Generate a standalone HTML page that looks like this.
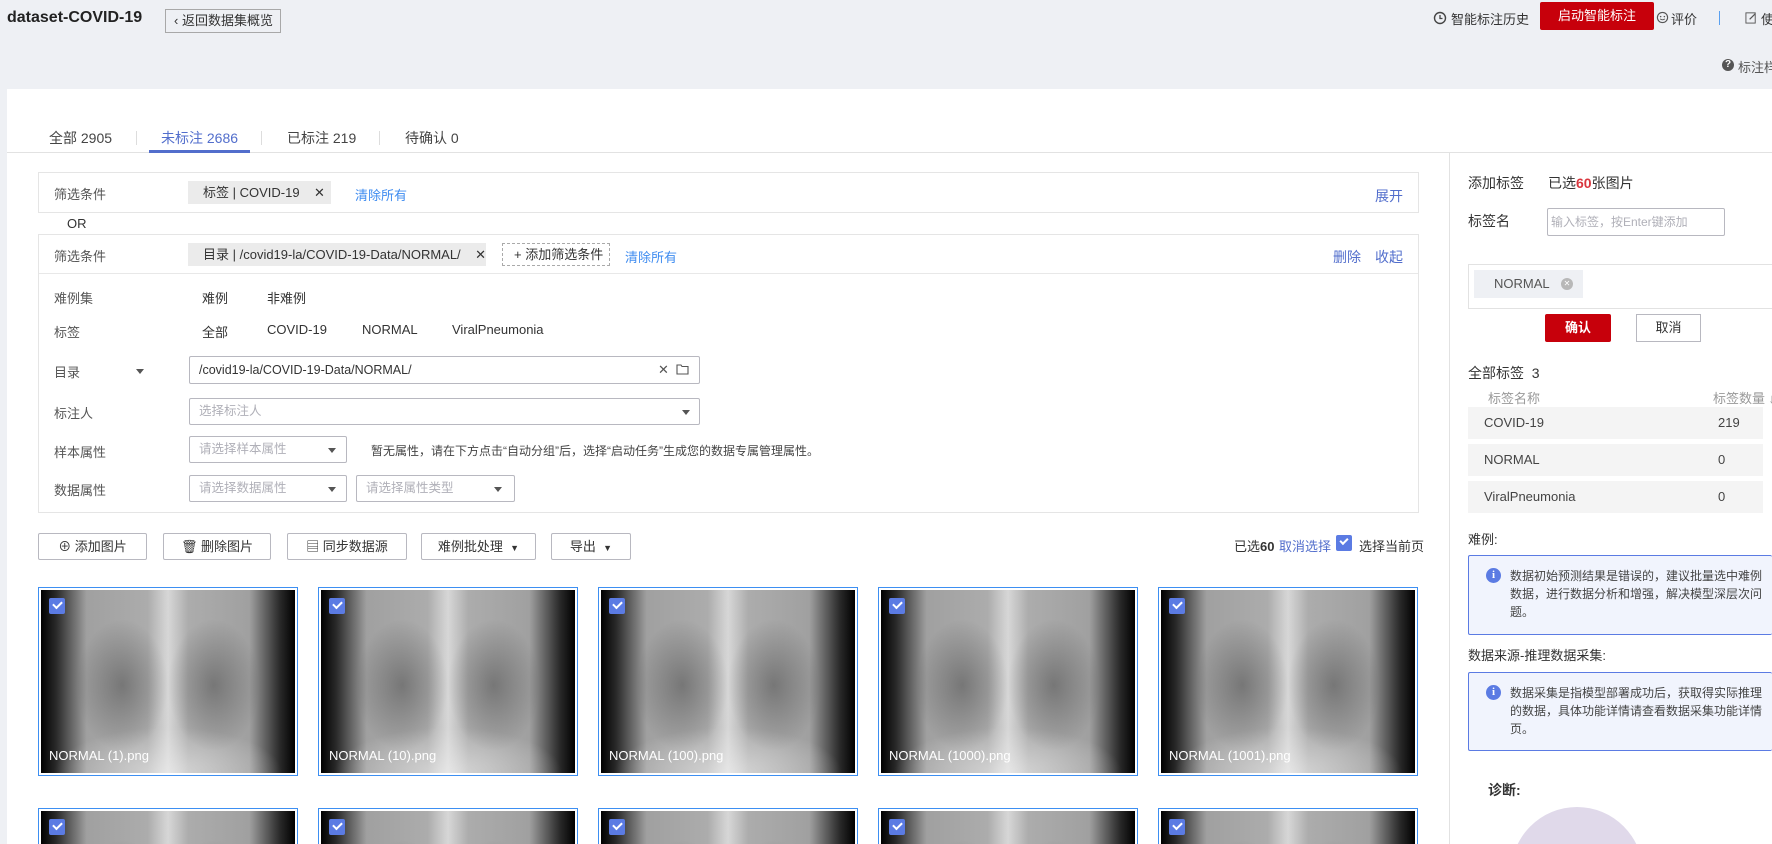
<!DOCTYPE html>
<html><head><meta charset="utf-8"><style>
*{box-sizing:border-box;margin:0;padding:0}
html,body{width:1772px;height:844px;overflow:hidden}
body{background:#eef0f4;font-family:"Liberation Sans","Noto Sans CJK SC",sans-serif;font-size:13px;color:#333;position:relative}
.a{position:absolute;white-space:nowrap}
.blue{color:#3f8cf0}
.tb{color:#526ecc}
.box{position:absolute;border:1px solid #e5e5e5;background:#fff}
.inp{position:absolute;border:1px solid #b8b8c0;border-radius:2px;background:#fff;color:#b0b0b8;padding-left:9px;font-size:12.5px}
.tri{position:absolute;width:0;height:0;border-left:4px solid transparent;border-right:4px solid transparent;border-top:5px solid #555}
.btn{position:absolute;border:1px solid #b8b8c0;border-radius:2px;background:#fff;text-align:center;line-height:25px;font-size:13px;color:#333}
.card{position:absolute;width:260px;height:189px;border:1px solid #3d8ff2;padding:2px;background:#fff;overflow:hidden}
.card.r2{height:36px;border-bottom:none;padding-bottom:0}
.img{width:100%;height:183px;position:relative;background:
radial-gradient(ellipse 18% 36% at 32% 52%,rgba(60,60,60,.45),rgba(60,60,60,0) 100%),
radial-gradient(ellipse 18% 36% at 68% 52%,rgba(60,60,60,.45),rgba(60,60,60,0) 100%),
linear-gradient(90deg,rgba(255,255,255,0) 42%,rgba(240,240,240,.6) 50%,rgba(255,255,255,0) 58%),
radial-gradient(ellipse 45% 25% at 50% 100%,rgba(225,225,225,.8),rgba(225,225,225,0)),
linear-gradient(90deg,#000 0%,#2a2a2a 6%,#a0a0a0 18%,#b0b0b0 50%,#a0a0a0 82%,#2a2a2a 94%,#000 100%)}
.chk{position:absolute;left:8px;top:8px;width:16px;height:16px;background:#5b7be3;border-radius:2px}
.chk:after{content:"";position:absolute;left:4px;top:3px;width:7px;height:4px;border-left:2px solid #fff;border-bottom:2px solid #fff;transform:rotate(-45deg)}
.fn{position:absolute;left:8px;bottom:10px;color:#fff;font-size:13px}
.row{position:absolute;left:1468px;width:295px;height:32px;background:#f4f4f4;line-height:32px;font-size:13px;color:#444}
.info{position:absolute;left:1468px;width:304px;border:1px solid #5b7be3;border-right:none;background:#f1f4fd;border-radius:2px;font-size:12px;color:#444;line-height:18px;padding:11px 0 0 41px;white-space:nowrap}
.ic{position:absolute;left:17px;top:12px;width:15px;height:15px;border-radius:50%;background:#5b7be3;color:#fff;font-size:11px;font-weight:bold;text-align:center;line-height:15px;font-family:"Liberation Serif",serif}
</style></head><body>
<div class="a" style="left:7px;top:9px;font-size:16px;font-weight:bold;color:#222">dataset-COVID-19</div>
<div class="a" style="left:165px;top:9px;width:116px;height:24px;border:1px solid #a8a8a8;line-height:22px;font-size:13px;padding-left:8px;color:#333">‹ 返回数据集概览</div>
<svg class="a" style="left:1433px;top:11px" width="14" height="14" viewBox="0 0 14 14"><circle cx="7" cy="7" r="5.5" fill="none" stroke="#444" stroke-width="1.4"/><path d="M7 4v3.5h2.5" fill="none" stroke="#444" stroke-width="1.3"/></svg>
<div class="a" style="left:1451px;top:9px;font-size:13px">智能标注历史</div>
<div class="a" style="left:1540px;top:2px;width:114px;height:28px;background:#c7000b;color:#fff;text-align:center;line-height:28px;font-size:13px;border-radius:2px">启动智能标注</div>
<svg class="a" style="left:1656px;top:11px" width="13" height="13" viewBox="0 0 14 14"><circle cx="7" cy="7" r="5.5" fill="none" stroke="#555" stroke-width="1.2"/><circle cx="5" cy="6" r=".8" fill="#555"/><circle cx="9" cy="6" r=".8" fill="#555"/><path d="M4.5 8.5q2.5 2 5 0" fill="none" stroke="#555"/></svg>
<div class="a" style="left:1671px;top:9px">评价</div>
<div class="a" style="left:1719px;top:11px;width:1px;height:14px;background:#59a0f0"></div>
<svg class="a" style="left:1745px;top:11px" width="13" height="13" viewBox="0 0 14 14"><rect x="1" y="2" width="10" height="11" fill="none" stroke="#555"/><path d="M5 9l6-6" stroke="#555" stroke-width="1.3"/></svg>
<div class="a" style="left:1761px;top:9px">使</div>
<div class="a" style="left:1722px;top:59px;width:12px;height:12px;border-radius:50%;background:#555;color:#fff;font-size:10px;text-align:center;line-height:12px;font-weight:bold">?</div>
<div class="a" style="left:1738px;top:57px;color:#555">标注样</div>

<div class="a" style="left:7px;top:89px;width:1765px;height:755px;background:#fff"></div>
<div class="a" style="left:7px;top:152px;width:1765px;height:1px;background:#e2e2e2"></div>
<div class="a" style="left:49px;top:128px;font-size:14px;color:#444">全部 2905</div>
<div class="a" style="left:136px;top:131px;width:1px;height:14px;background:#ddd"></div>
<div class="a tb" style="left:161px;top:128px;font-size:14px">未标注 2686</div>
<div class="a" style="left:149px;top:150px;width:101px;height:3px;background:#526ecc"></div>
<div class="a" style="left:261px;top:131px;width:1px;height:14px;background:#ddd"></div>
<div class="a" style="left:287px;top:128px;font-size:14px;color:#444">已标注 219</div>
<div class="a" style="left:379px;top:131px;width:1px;height:14px;background:#ddd"></div>
<div class="a" style="left:405px;top:128px;font-size:14px;color:#444">待确认 0</div>

<div class="box" style="left:38px;top:172px;width:1381px;height:41px"></div>
<div class="a" style="left:54px;top:184px;color:#555">筛选条件</div>
<div class="a" style="left:188px;top:181px;width:143px;height:23px;background:#ebebeb;line-height:23px;padding-left:15px">标签 | COVID-19 &nbsp;&nbsp;&nbsp;✕</div>
<div class="a blue" style="left:355px;top:185px">清除所有</div>
<div class="a tb" style="left:1375px;top:186px;font-size:14px">展开</div>
<div class="a" style="left:67px;top:216px">OR</div>

<div class="box" style="left:38px;top:234px;width:1381px;height:279px"></div>
<div class="a" style="left:39px;top:273px;width:1379px;height:1px;background:#e8e8e8"></div>
<div class="a" style="left:54px;top:246px;color:#555">筛选条件</div>
<div class="a" style="left:188px;top:243px;width:298px;height:23px;background:#ebebeb;line-height:23px;padding-left:15px">目录 | /covid19-la/COVID-19-Data/NORMAL/ &nbsp;&nbsp;&nbsp;✕</div>
<div class="a" style="left:502px;top:243px;width:108px;height:23px;border:1px dashed #aaa;line-height:21px;padding-left:11px">+ 添加筛选条件</div>
<div class="a blue" style="left:625px;top:247px">清除所有</div>
<div class="a tb" style="left:1333px;top:247px;font-size:14px">删除</div>
<div class="a tb" style="left:1375px;top:247px;font-size:14px">收起</div>

<div class="a" style="left:54px;top:288px;color:#555">难例集</div>
<div class="a" style="left:202px;top:288px">难例</div>
<div class="a" style="left:267px;top:288px">非难例</div>
<div class="a" style="left:54px;top:322px;color:#555">标签</div>
<div class="a" style="left:202px;top:322px">全部</div>
<div class="a" style="left:267px;top:322px">COVID-19</div>
<div class="a" style="left:362px;top:322px">NORMAL</div>
<div class="a" style="left:452px;top:322px">ViralPneumonia</div>
<div class="a" style="left:54px;top:362px;color:#555">目录</div>
<div class="tri" style="left:136px;top:369px"></div>
<div class="inp" style="left:189px;top:356px;width:511px;height:28px;line-height:26px;color:#333">/covid19-la/COVID-19-Data/NORMAL/</div>
<div class="a" style="left:658px;top:362px;color:#555">✕</div>
<svg class="a" style="left:676px;top:363px" width="13" height="12" viewBox="0 0 13 12"><path d="M1 2h4l1 1.5h6V11H1z" fill="none" stroke="#555" stroke-width="1.1"/></svg>
<div class="a" style="left:54px;top:403px;color:#555">标注人</div>
<div class="inp" style="left:189px;top:398px;width:511px;height:27px;line-height:25px">选择标注人</div>
<div class="tri" style="left:682px;top:410px"></div>
<div class="a" style="left:54px;top:442px;color:#555">样本属性</div>
<div class="inp" style="left:189px;top:436px;width:158px;height:27px;line-height:25px">请选择样本属性</div>
<div class="tri" style="left:328px;top:448px"></div>
<div class="a" style="left:371px;top:442px;font-size:12px;color:#444">暂无属性，请在下方点击“自动分组”后，选择“启动任务”生成您的数据专属管理属性。</div>
<div class="a" style="left:54px;top:480px;color:#555">数据属性</div>
<div class="inp" style="left:189px;top:475px;width:158px;height:27px;line-height:25px">请选择数据属性</div>
<div class="tri" style="left:328px;top:487px"></div>
<div class="inp" style="left:356px;top:475px;width:159px;height:27px;line-height:25px">请选择属性类型</div>
<div class="tri" style="left:494px;top:487px"></div>

<div class="btn" style="left:38px;top:533px;width:109px;height:27px">⊕ 添加图片</div>
<div class="btn" style="left:163px;top:533px;width:108px;height:27px">🗑 删除图片</div>
<div class="btn" style="left:287px;top:533px;width:120px;height:27px">▤ 同步数据源</div>
<div class="btn" style="left:421px;top:533px;width:115px;height:27px">难例批处理 &nbsp;<span style="font-size:9px">▼</span></div>
<div class="btn" style="left:551px;top:533px;width:80px;height:27px">导出 &nbsp;<span style="font-size:9px">▼</span></div>
<div class="a" style="left:1234px;top:536px">已选<b>60</b></div>
<div class="a" style="left:1279px;top:536px;color:#526ecc">取消选择</div>
<div class="a" style="left:1336px;top:535px;width:16px;height:16px;background:#5b7be3;border-radius:2px"></div>
<div class="a" style="left:1340px;top:538px;width:8px;height:5px;border-left:2px solid #fff;border-bottom:2px solid #fff;transform:rotate(-45deg)"></div>
<div class="a" style="left:1359px;top:536px">选择当前页</div>

<div class="card" style="left:38px;top:587px"><div class="img"><div class="chk"></div><div class="fn">NORMAL (1).png</div></div></div>
<div class="card" style="left:318px;top:587px"><div class="img"><div class="chk"></div><div class="fn">NORMAL (10).png</div></div></div>
<div class="card" style="left:598px;top:587px"><div class="img"><div class="chk"></div><div class="fn">NORMAL (100).png</div></div></div>
<div class="card" style="left:878px;top:587px"><div class="img"><div class="chk"></div><div class="fn">NORMAL (1000).png</div></div></div>
<div class="card" style="left:1158px;top:587px"><div class="img"><div class="chk"></div><div class="fn">NORMAL (1001).png</div></div></div>
<div class="card r2" style="left:38px;top:808px"><div class="img"><div class="chk"></div></div></div>
<div class="card r2" style="left:318px;top:808px"><div class="img"><div class="chk"></div></div></div>
<div class="card r2" style="left:598px;top:808px"><div class="img"><div class="chk"></div></div></div>
<div class="card r2" style="left:878px;top:808px"><div class="img"><div class="chk"></div></div></div>
<div class="card r2" style="left:1158px;top:808px"><div class="img"><div class="chk"></div></div></div>

<div class="a" style="left:1449px;top:152px;width:1px;height:692px;background:#e2e2e2"></div>
<div class="a" style="left:1468px;top:173px;font-size:14px">添加标签</div>
<div class="a" style="left:1548px;top:173px;font-size:14px">已选<b style="color:#d9363e">60</b>张图片</div>
<div class="a" style="left:1468px;top:211px;font-size:14px">标签名</div>
<div class="inp" style="left:1547px;top:208px;width:178px;height:28px;line-height:26px;font-size:12px;padding-left:3px">输入标签，按Enter键添加</div>
<div class="a" style="left:1468px;top:264px;width:304px;height:45px;border:1px solid #e2e2e2;border-right:none"></div>
<div class="a" style="left:1474px;top:270px;width:109px;height:28px;background:#eef0f4;line-height:28px;padding-left:20px;color:#555">NORMAL</div>
<div class="a" style="left:1561px;top:278px;width:12px;height:12px;border-radius:50%;background:#b8b8b8;color:#fff;font-size:8px;text-align:center;line-height:12px">✕</div>
<div class="a" style="left:1545px;top:314px;width:66px;height:28px;background:#c7000b;color:#fff;text-align:center;line-height:28px;font-weight:bold;border-radius:2px">确认</div>
<div class="a" style="left:1636px;top:314px;width:65px;height:28px;border:1px solid #b8b8c0;text-align:center;line-height:26px">取消</div>
<div class="a" style="left:1468px;top:363px;font-size:14px">全部标签 &nbsp;3</div>
<div class="a" style="left:1488px;top:388px;color:#999">标签名称</div>
<div class="a" style="left:1713px;top:388px;color:#999">标签数量 ↓</div>
<div class="row" style="top:407px"><span style="position:absolute;left:16px">COVID-19</span><span style="position:absolute;left:250px">219</span></div>
<div class="row" style="top:444px"><span style="position:absolute;left:16px">NORMAL</span><span style="position:absolute;left:250px">0</span></div>
<div class="row" style="top:481px"><span style="position:absolute;left:16px">ViralPneumonia</span><span style="position:absolute;left:250px">0</span></div>
<div class="a" style="left:1468px;top:529px">难例:</div>
<div class="info" style="top:555px;height:80px"><div class="ic">i</div>数据初始预测结果是错误的，建议批量选中难例<br>数据，进行数据分析和增强，解决模型深层次问<br>题。</div>
<div class="a" style="left:1468px;top:645px">数据来源-推理数据采集:</div>
<div class="info" style="top:672px;height:79px"><div class="ic">i</div>数据采集是指模型部署成功后，获取得实际推理<br>的数据，具体功能详情请查看数据采集功能详情<br>页。</div>
<div class="a" style="left:1488px;top:780px;font-weight:bold;font-size:14px">诊断:</div>
<div class="a" style="left:1511px;top:807px;width:132px;height:37px;overflow:hidden"><div style="width:132px;height:132px;border-radius:50%;background:#e0d9ea"></div></div>
</body></html>
